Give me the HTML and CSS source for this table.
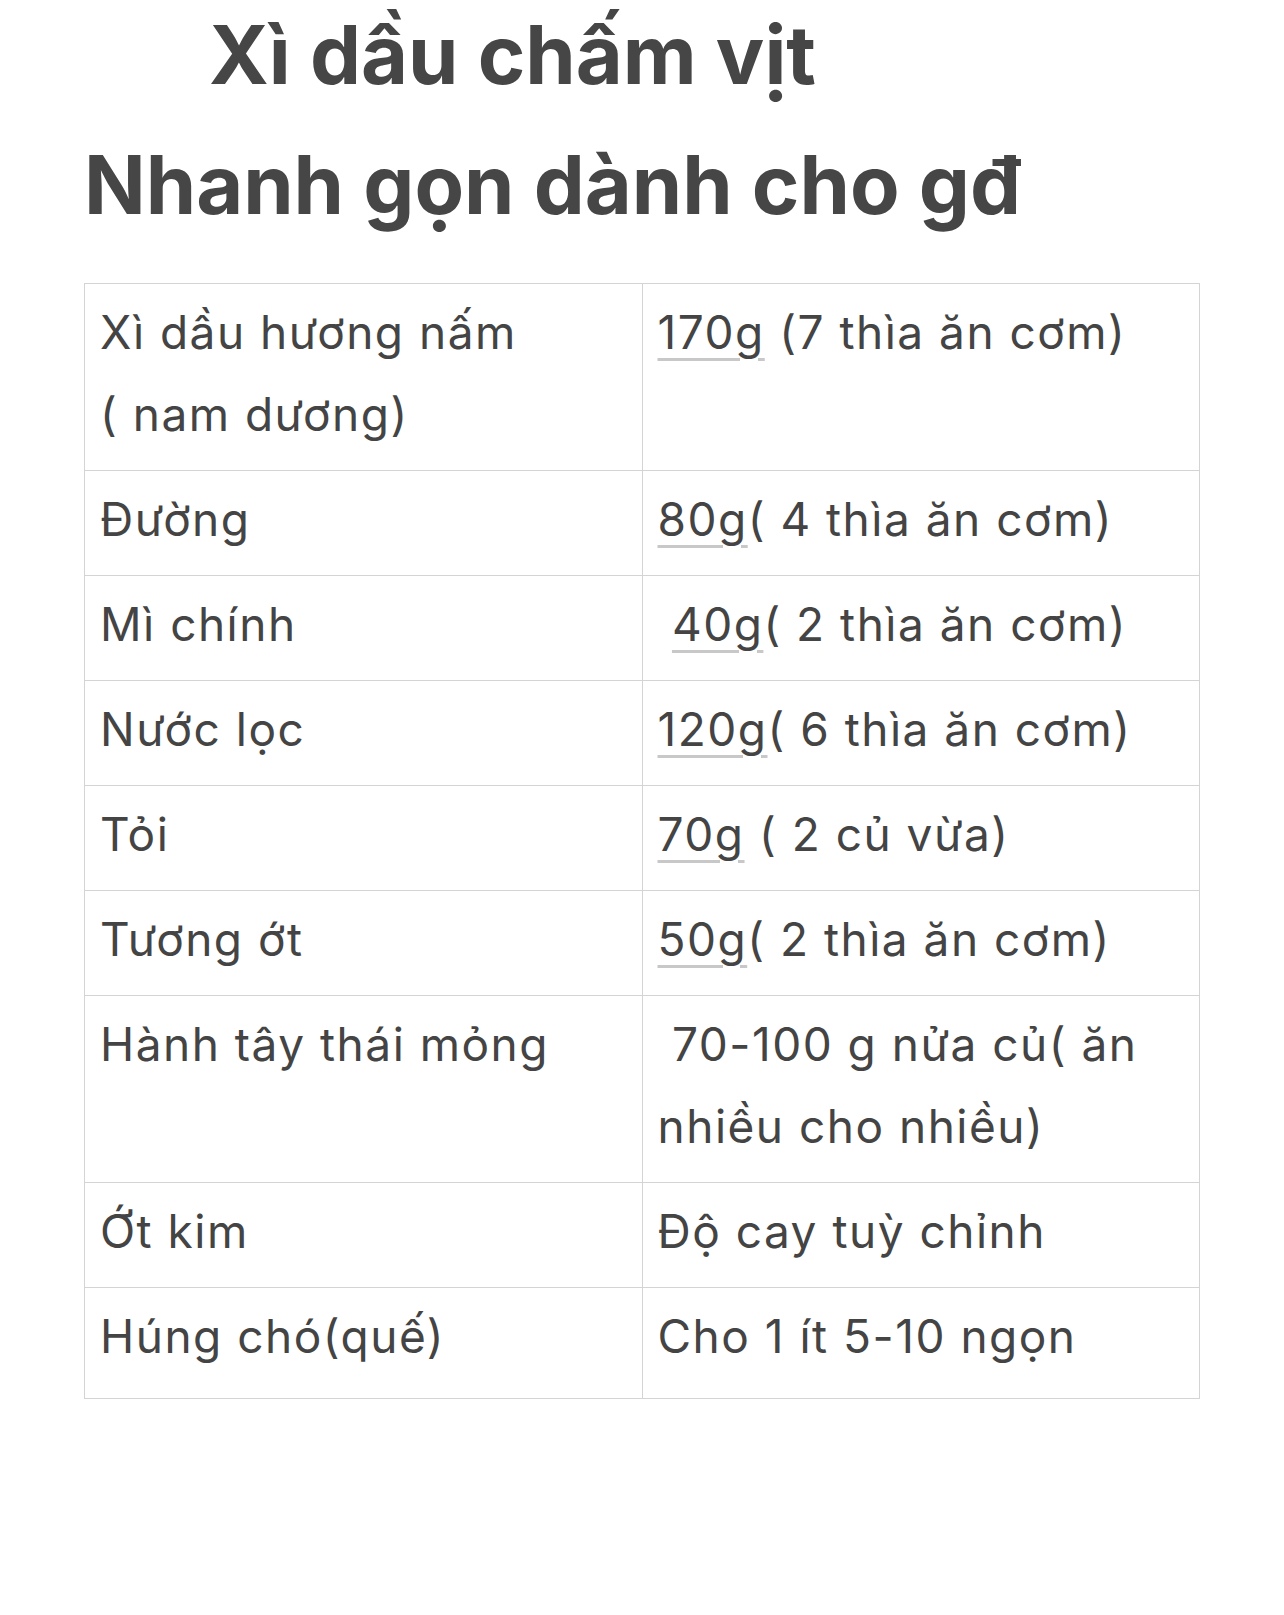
FILE: index.html
```html
<!DOCTYPE html>
<html lang="vi">
<head>
<meta charset="utf-8">
<title>Xì dầu chấm vịt</title>
<link rel="stylesheet" href="styles.css">
</head>
<body>
<main class="page">
  <h1 class="title">
    <span class="title-line indent">Xì dầu chấm vịt</span>
    <span class="title-line second">Nhanh gọn dành cho gđ</span>
  </h1>
  <table class="recipe">
    <tbody>
      <tr><td>Xì dầu hương nấm<br>( nam dương)</td><td><span class="qty">170g</span> (7 thìa ăn cơm)</td></tr>
      <tr><td>Đường</td><td><span class="qty">80g</span>( 4 thìa ăn cơm)</td></tr>
      <tr><td>Mì chính</td><td>&nbsp;<span class="qty">40g</span>( 2 thìa ăn cơm)</td></tr>
      <tr><td>Nước lọc</td><td><span class="qty">120g</span>( 6 thìa ăn cơm)</td></tr>
      <tr><td>Tỏi</td><td><span class="qty">70g</span> ( 2 củ vừa)</td></tr>
      <tr><td>Tương ớt</td><td><span class="qty">50g</span>( 2 thìa ăn cơm)</td></tr>
      <tr><td>Hành tây thái mỏng</td><td>&nbsp;70-100 g nửa củ( ăn nhiều cho nhiều)</td></tr>
      <tr><td>Ớt kim</td><td>Độ cay tuỳ chỉnh</td></tr>
      <tr><td>Húng chó(quế)</td><td>Cho 1 ít 5-10 ngọn</td></tr>
    </tbody>
  </table>
</main>
</body>
</html>
```
FILE: styles.css
```css
html, body {
  margin: 0;
  padding: 0;
  background: #ffffff;
}

.page {
  padding-left: 84px;
  width: 1116px;
  font-family: Inter, "Noto Sans", sans-serif;
  color: #444444;
}

.title {
  margin: 0;
  font-weight: 700;
  font-size: 81px;
  line-height: 110px;
  color: #464646;
}

.title-line {
  display: block;
}

.title-line.indent {
  padding-left: 125px;
}

.title-line.second {
  margin-top: 20px;
}

.recipe {
  margin-top: 43px;
  width: 1116px;
  border-collapse: collapse;
  table-layout: fixed;
}

.recipe td {
  width: 50%;
  border: 1px solid #d4d4d4;
  padding: 7px 15px 15px 15px;
  vertical-align: top;
  font-size: 46px;
  line-height: 82px;
  letter-spacing: 1.5px;
  color: #444444;
}

.recipe tr:last-child td {
  padding-bottom: 21px;
}

.qty {
  text-decoration: underline;
  text-decoration-color: #c8c8c8;
  text-decoration-thickness: 3px;
  text-underline-offset: 9px;
}
```
